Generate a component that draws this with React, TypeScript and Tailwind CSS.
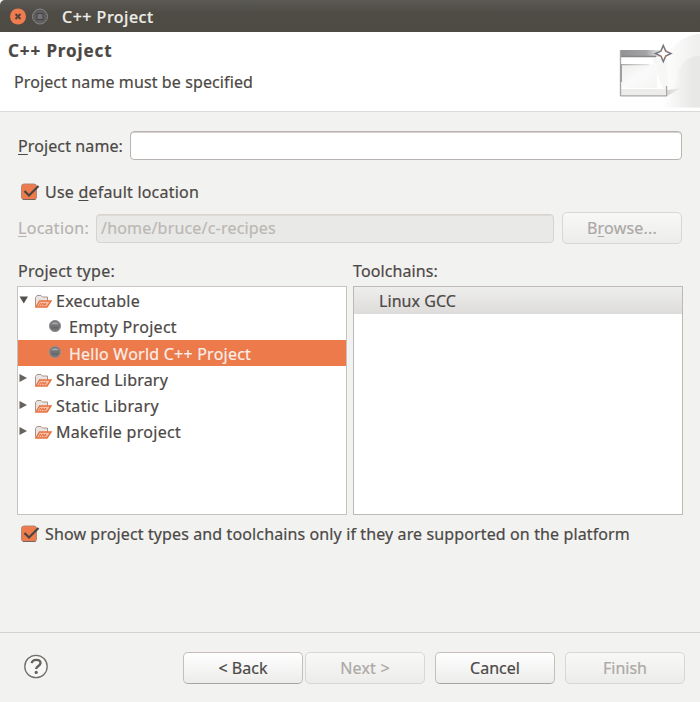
import type { ReactNode } from 'react';

function Checkbox({ children, spacing }: { children: ReactNode; spacing: string }) {
  return (
    <div className="ml-[2px] flex h-6 items-center">
      <svg width="20" height="20" viewBox="0 0 20 20" className="shrink-0">
        <rect x="1.500" y="2" width="15" height="15.500" rx="2.5" fill="#ee7b4b" stroke="#b58675" />
        <path d="M3 17.5h12.500" stroke="#70665f" strokeWidth="1" />
        <path d="M4.5 9l4.500 4.5L18.500 4" fill="none" stroke="#4a4541" strokeWidth="2.200" />
      </svg>
      <span className={'ml-[5px] ' + spacing}>{children}</span>
    </div>
  );
}

function Folder() {
  return (
    <svg width="18" height="15" viewBox="0 0 18 15" className="shrink-0">
      <path d="M1.500 12.500V3.500L3 1.500h4l1.500 1.500h5v4" fill="#e9e4e1" stroke="#a8938a" />
      <path d="M2 13L5.500 7h11.500L13 13z" fill="#f7bfa7" stroke="#e8703f" strokeWidth="1.400" />
      <path d="M5 12l1.500-3 1 2.500L9 9l1 2.500L11.500 9l.5 2.500" fill="none" stroke="#e9743f" strokeWidth="1" />
    </svg>
  );
}

function Dot() {
  return (
    <svg width="14" height="14" viewBox="0 0 14 14" className="shrink-0">
      <circle cx="7" cy="7" r="5.600" fill="#747478" stroke="#929294" />
      <path d="M3.300 5.200C4.500 2.500 9.500 2.500 10.700 5.200z" fill="#a9a9ac" />
      <path d="M3.500 8.800h7" stroke="#66666a" strokeWidth="1.500" />
    </svg>
  );
}

function Branch({ label, spacing, open }: { label: string; spacing: string; open?: boolean }) {
  return (
    <div className="flex h-[26.25px] items-center pt-[2px]">
      <svg width="10" height="10" viewBox="0 0 10 10" className="mb-[3px] ml-px shrink-0">
        {open ? <path d="M.5 1.500h8.500L4.800 8.500z" fill="#55524e" /> : <path d="M.5 1v8l7.500-4z" fill="#66635f" />}
      </svg>
      <div className="ml-[5px] flex items-center gap-1">
        <div className="pt-px"><Folder /></div>
        <span className={spacing}>{label}</span>
      </div>
    </div>
  );
}

function Leaf({ label, spacing, selected }: { label: string; spacing: string; selected?: boolean }) {
  return (
    <div className={'flex h-[26.25px] items-center pt-[2px] pl-[30px] ' + (selected ? 'bg-[#ec7a4b] text-[#f9eee9]' : '')}>
      <div className="mb-[3px]"><Dot /></div>
      <span className={'ml-[7px] ' + spacing}>{label}</span>
    </div>
  );
}

function Button({ children, disabled, className }: { children: ReactNode; disabled?: boolean; className?: string }) {
  return (
    <button
      className={
        'flex h-8 w-[120px] shrink-0 items-center justify-center rounded-[5px] border bg-linear-to-b ' +
        (disabled
          ? 'border-[#dbd6d1] from-[#f8f8f7] to-[#ececea] text-[#aca8a5] '
          : 'border-[#c5beb9] border-b-[#aaa4a0] from-white to-[#ececeb] ') +
        (className ?? '')
      }
    >
      {children}
    </button>
  );
}

function BannerArt() {
  return (
    <svg width="120" height="78" viewBox="0 0 120 78">
      <defs>
        <linearGradient id="bar" x1="0" x2="1">
          <stop offset="0" stopColor="#929295" />
          <stop offset="0.65" stopColor="#a3a3a5" />
          <stop offset="1" stopColor="#e8e8e8" />
        </linearGradient>
        <linearGradient id="pane" x1="0" x2="1" y1="0" y2="1">
          <stop offset="0" stopColor="#ededec" />
          <stop offset="0.5" stopColor="#fafafa" />
          <stop offset="1" stopColor="#f5f5f4" />
        </linearGradient>
        <linearGradient id="sweep" gradientUnits="userSpaceOnUse" x1="80" x2="120" y1="0" y2="0">
          <stop offset="0" stopColor="#ffffff" />
          <stop offset="1" stopColor="#efefee" />
        </linearGradient>
        <linearGradient id="hill" gradientUnits="userSpaceOnUse" x1="84" x2="112" y1="0" y2="0">
          <stop offset="0" stopColor="#f5f5f5" stopOpacity="0" />
          <stop offset="1" stopColor="#e8e8e7" />
        </linearGradient>
        <linearGradient id="shade" x1="0" x2="1">
          <stop offset="0" stopColor="#d8d6d5" />
          <stop offset="1" stopColor="#f1f1f0" />
        </linearGradient>
        <linearGradient id="line" x1="0" x2="1">
          <stop offset="0" stopColor="#aaa7a6" />
          <stop offset="1" stopColor="#e6e5e4" />
        </linearGradient>
      </defs>
      <path d="M120 2C106 3 98 9 91 18L80 76h40z" fill="url(#sweep)" />
      <path d="M120 24c-14 0-20 8-22 18-2 14-8 24-17 33h39z" fill="url(#hill)" />
      <path d="M87 58l15-2-15 8z" fill="url(#shade)" />
      <rect x="40" y="18" width="47" height="46" fill="#fff" />
      <path d="M72 26h15l1 28-3 9z" fill="#f7f7f6" />
      <rect x="40" y="18" width="40" height="7" fill="url(#bar)" />
      <path d="M40 24.500h36" stroke="#858589" strokeWidth="1.500" />
      <rect x="41" y="32" width="36" height="24" fill="url(#pane)" />
      <rect x="41" y="32" width="28" height="1.300" fill="url(#line)" />
      <path d="M41 57h44v6H41z" fill="#ececeb" />
      <path d="M40.500 18v46M40.500 63.800h46V54" fill="none" stroke="#a7a4a3" strokeWidth="1.300" />
      <path d="M41 32v18" stroke="#a19e9d" strokeWidth="2" />
      <path d="M83.300 13.500L85.700 19.100L91 21.500L85.700 24L83.300 29.500L80.900 24L75.500 21.500L80.900 19.100Z" fill="#fff" stroke="#77777d" strokeWidth="1.500" />
      <path d="M86 18.500l1 1M86.500 23.500l-1 1.500M81 24.500l-1-1" stroke="#e9794f" strokeWidth="1.200" />
    </svg>
  );
}

export default function App() {
  return (
    <div className="flex h-[702px] w-[700px] flex-col overflow-hidden bg-[#f2f2f1] font-['Noto_Sans','Open_Sans',sans-serif] text-[16px] leading-6 whitespace-pre text-[#4c4845] [-webkit-text-stroke:0.2px]">
      <header className="flex h-8 shrink-0 items-center rounded-tl-[5px] bg-linear-to-b from-[#5b5953] via-[#4f4c46] via-40% to-[#4d4a44] pt-[2px] pl-[9px]">
        <svg width="42" height="18" viewBox="0 0 42 18" className="shrink-0">
          <circle cx="9" cy="8.500" r="8" fill="#ee7c4e" />
          <path d="M6.500 6l5 5M11.500 6l-5 5" stroke="#55443a" strokeWidth="2" />
          <circle cx="31" cy="8.500" r="7.500" fill="#605e5c" stroke="#85838a" />
          <rect x="28" y="5.500" width="6" height="6" fill="#74727a" stroke="#45433f" />
        </svg>
        <h1 className="ml-[11px] font-medium tracking-[0.5px] text-[#eeede8]">C++ Project</h1>
      </header>

      <section className="flex h-[80px] shrink-0 justify-between border-b border-[#dcdad8] bg-white">
        <div className="pt-[7px]">
          <h2 className="pl-2 text-[17px] leading-6 font-bold tracking-[0.9px]">C++ Project</h2>
          <p className="mt-[7px] pl-[14px] tracking-[0.11px]">Project name must be specified</p>
        </div>
        <BannerArt />
      </section>

      <main className="flex h-[520px] shrink-0 flex-col pr-[18px] pl-[18px]">
        <label className="mt-[19px] flex h-[29px] items-center">
          <span className="w-[112px] tracking-[0.11px]"><u className="decoration-1 underline-offset-2">P</u>roject name:</span>
          <input className="h-[29px] min-w-0 flex-1 rounded-[4px] border border-[#b9b4b1] bg-white px-1 shadow-[inset_0_1px_0_#d3d0ce] outline-none" />
        </label>

        <div className="mt-5">
          <Checkbox spacing="tracking-[0.21px]">Use <u className="decoration-1 underline-offset-2">d</u>efault location</Checkbox>
        </div>

        <div className="mt-2 flex h-8 items-center text-[#b7b3b0]">
          <span className="w-[78px] shrink-0 tracking-[0.28px]"><u className="decoration-1 underline-offset-2">L</u>ocation:</span>
          <div className="mr-2 flex h-[29px] flex-1 items-center rounded-[4px] border border-[#d8d3ce] bg-[#e9e9e8] pl-1 tracking-[0.19px] text-[#bcb8b4] shadow-[inset_0_1px_0_#dedad6]">/home/bruce/c-recipes</div>
          <Button disabled className="tracking-[0.2px]"><span>B<u className="decoration-1 underline-offset-2">r</u>owse...</span></Button>
        </div>

        <div className="mt-[15px] -mr-px -ml-px flex gap-[6px]">
          <div className="w-[330px]">
            <h3 className="h-[27px] pl-px tracking-[0.27px]">Project type:</h3>
            <div className="h-[229px] border border-[#c9c3bf] bg-white">
              <Branch label="Executable" spacing="tracking-[0.26px]" open />
              <Leaf label="Empty Project" spacing="tracking-[0.3px]" />
              <Leaf label="Hello World C++ Project" spacing="tracking-[0.23px]" selected />
              <Branch label="Shared Library" spacing="tracking-[0.19px]" />
              <Branch label="Static Library" spacing="tracking-[0.38px]" />
              <Branch label="Makefile project" spacing="tracking-[0.29px]" />
            </div>
          </div>
          <div className="w-[330px]">
            <h3 className="h-[27px] tracking-[0.11px]">Toolchains:</h3>
            <div className="h-[229px] border border-[#bfb9b6] bg-white">
              <div className="h-[27px] bg-linear-to-b from-[#eeeeed] to-[#dddcda] pt-px pl-[25px] leading-[27px] tracking-[0.06px]">Linux GCC</div>
            </div>
          </div>
        </div>

        <div className="mt-[7px]">
          <Checkbox spacing="tracking-[0.12px]">Show project types and toolchains only if they are supported on the platform</Checkbox>
        </div>
      </main>

      <footer className="flex flex-1 border-t border-[#d3d1cf] pt-[19px] pl-6">
        <svg width="25" height="25" viewBox="0 0 25 25" className="mt-[2px] mr-[134px] shrink-0">
          <circle cx="12" cy="12.500" r="11.200" fill="#f7f7f6" stroke="#716d6a" strokeWidth="1.3" />
          <path d="M7.800 9.200C8.200 4.800 16.500 4.700 16.500 9c0 2.900-4.300 3-4.300 6" fill="none" stroke="#65615e" strokeWidth="2.400" />
          <circle cx="12.200" cy="18.400" r="1.600" fill="#65615e" />
        </svg>
        <Button>{'< Back'}</Button>
        <Button disabled className="ml-[2px] tracking-[0.2px]">{'Next >'}</Button>
        <Button className="ml-[10px]">Cancel</Button>
        <Button disabled className="ml-[10px]">Finish</Button>
      </footer>
    </div>
  );
}
